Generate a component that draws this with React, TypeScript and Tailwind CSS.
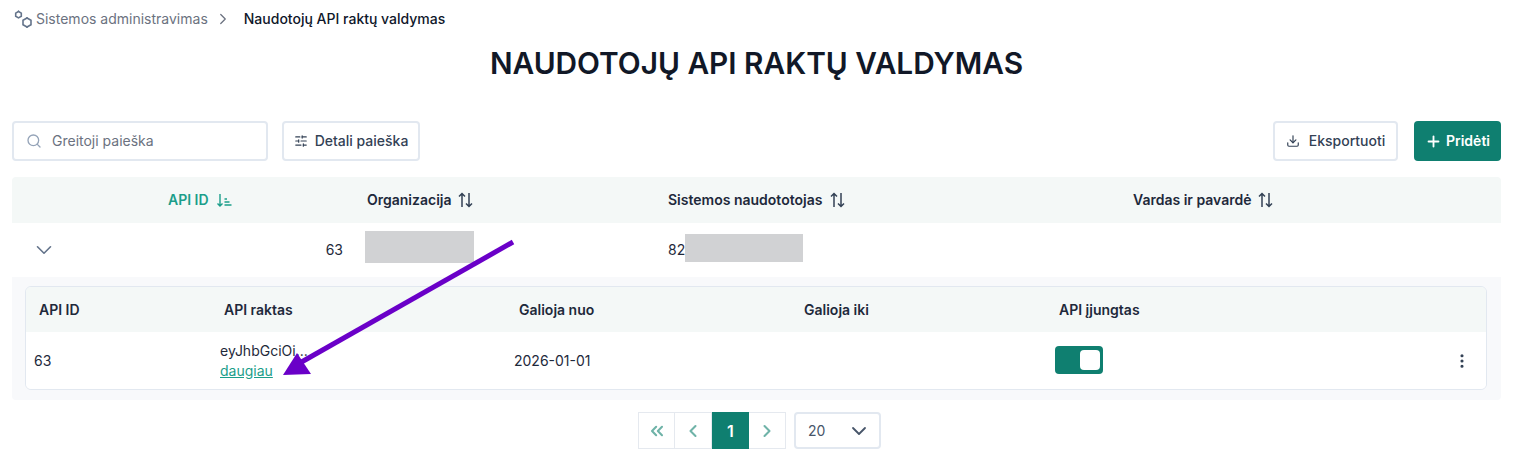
import React from 'react';
import {
  ChevronDown,
  ChevronLeft,
  ChevronRight,
  ChevronsLeft,
  Download,
  EllipsisVertical,
  Plus,
  Search,
  SlidersHorizontal,
} from 'lucide-react';

const SortIcon: React.FC = () => (
  <svg width="15" height="16" viewBox="0 0 15 16" fill="none" stroke="#334155" strokeWidth="1.5" className="shrink-0">
    <path d="M4 15V1.5M1 4.5l3-3 3 3" />
    <path d="M11 1v13.5M8 11.5l3 3 3-3" />
  </svg>
);

const SortedIcon: React.FC = () => (
  <svg width="16" height="16" viewBox="0 0 16 16" fill="none" stroke="#1b9e8a" strokeWidth="1.4" className="ml-[7px] shrink-0">
    <path d="M4 2v12M1.5 11.5L4 14l2.5-2.5" />
    <path d="M8.5 7H11M8.5 10h5M8.5 13h7" />
  </svg>
);

const GearsIcon: React.FC = () => (
  <svg width="19" height="19" viewBox="0 0 19 19" fill="none" stroke="#64748b" strokeWidth="1.6" className="shrink-0">
    <path d="M4.500 1.500l2.800 1.600v3.200l-2.800 1.600-2.800-1.600V3.100z" />
    <path d="M13 8l4 2.300v4.400l-4 2.300-4-2.300v-4.400z" />
    <path d="M4.500 0.500v1M13 7v1M13 17v1" strokeWidth="1.2" />
  </svg>
);

const PageButton: React.FC<{ children: React.ReactNode; active?: boolean }> = ({ children, active }) => (
  <button
    className={
      active
        ? 'flex h-[37px] w-[37px] items-center justify-center bg-[#0f7f70] text-base font-semibold text-white'
        : 'flex h-[37px] w-[37px] items-center justify-center border-y border-r border-[#e5e9ef] first:border-l text-[#6fb3a8]'
    }
  >
    {children}
  </button>
);

export default function App() {
  return (
    <div className="relative h-[461px] overflow-hidden bg-white pl-3 pr-[18px] font-['Inter',sans-serif] text-sm text-[#1e293b]">
      {/* breadcrumb */}
      <div className="flex h-[38px] items-center text-sm">
        <span className="ml-[2px]"><GearsIcon /></span>
        <span className="ml-[3px] text-[#6b7280]">Sistemos administravimas</span>
        <ChevronRight size={18} strokeWidth={1.7} className="ml-[6px] text-[#6b7280]" />
        <span className="ml-3 font-medium text-[#0f172a]">Naudotojų API raktų valdymas</span>
      </div>

      <h1 className="mt-[7px] text-center text-[29.8px] leading-9 font-semibold text-[#111827] uppercase">
        Naudotojų API raktų valdymas
      </h1>

      {/* toolbar */}
      <div className="mt-10 flex h-10 items-center">
        <div className="flex h-10 w-64 items-center rounded border-2 border-[#e2e8f0] pl-3 text-[#6b7280]">
          <Search size={16} strokeWidth={2} className="text-[#94a3b8]" />
          <span className="ml-[10px]">Greitoji paieška</span>
        </div>
        <button className="ml-[14px] flex h-10 w-[138px] items-center justify-center gap-[7px] rounded border-2 border-[#e2e8f0] font-medium text-[#334155]">
          <SlidersHorizontal size={14} strokeWidth={2} />
          Detali paieška
        </button>
        <button className="ml-auto flex h-10 w-[125px] items-center justify-center gap-[9px] rounded border-2 border-[#e2e8f0] font-medium text-[#334155]">
          <Download size={14} strokeWidth={2} />
          Eksportuoti
        </button>
        <button className="ml-4 flex h-10 w-[87px] items-center justify-center gap-1 rounded bg-[#0f7f70] font-semibold text-white">
          <Plus size={17} strokeWidth={2.6} />
          Pridėti
        </button>
      </div>

      {/* main table */}
      <div className="mt-4 overflow-hidden rounded">
        <div className="grid h-[46px] grid-cols-[343px_301px_465px_1fr] items-center bg-[#f4f8f7] font-semibold">
          <div className="flex items-center pl-[156px] text-[#1b9e8a]">
            API ID
            <SortedIcon />
          </div>
          <div className="flex items-center gap-[6px] pl-3">Organizacija<SortIcon /></div>
          <div className="flex items-center gap-2 pl-3">Sistemos naudototojas<SortIcon /></div>
          <div className="flex items-center gap-[6px] pl-3">Vardas ir pavardė<SortIcon /></div>
        </div>

        <div className="grid h-[54px] grid-cols-[343px_301px_465px_1fr] items-center bg-white">
          <div className="flex items-center justify-between pl-[19px] pr-3">
            <ChevronDown size={26} strokeWidth={1.5} className="text-[#64748b]" />
            <span>63</span>
          </div>
          <div className="flex items-center pl-[10px]"><div className="-mt-[6px] h-8 w-[109px] bg-[#d1d2d4]" /></div>
          <div className="flex items-center pl-3">
            <span>82</span>
            <div className="-mt-1 h-7 w-[118px] bg-[#d1d2d4]" />
          </div>
          <div />
        </div>

        {/* expanded row */}
        <div className="h-[123px] bg-[#f8f9fb] pt-[9px] pr-[14px] pl-[13px]">
          <div className="overflow-hidden rounded-md border border-[#e2e8f0]">
            <div className="grid h-[45px] grid-cols-[186px_295px_285px_255px_1fr] items-center bg-[#f4f8f7] font-semibold">
              <div className="pl-[13px]">API ID</div>
              <div className="pl-3">API raktas</div>
              <div className="pl-3">Galioja nuo</div>
              <div className="pl-3">Galioja iki</div>
              <div className="pl-3">API įjungtas</div>
            </div>
            <div className="grid h-[57px] grid-cols-[186px_295px_285px_255px_1fr] items-center bg-white">
              <div className="pl-2">63</div>
              <div className="pl-2 leading-[20px]">
                <div>eyJhbGciOi...</div>
                <a className="text-[#1b9e8a] underline">daugiau</a>
              </div>
              <div className="pl-[7px]">2026-01-01</div>
              <div />
              <div className="flex items-center justify-between pl-2 pr-[15px]">
                <div className="-mt-[2px] flex h-7 w-12 items-center justify-end rounded bg-[#0f7f70] pr-[3px]">
                  <div className="h-5 w-5 rounded bg-white" />
                </div>
                <EllipsisVertical size={18} strokeWidth={2.2} className="text-[#334155]" />
              </div>
            </div>
          </div>
        </div>
      </div>

      {/* pagination */}
      <div className="mt-3 flex h-[37px]">
        <div className="ml-[626px] flex">
          <PageButton><ChevronsLeft size={20} strokeWidth={2.5} /></PageButton>
          <PageButton><ChevronLeft size={20} strokeWidth={2.5} /></PageButton>
          <PageButton active>1</PageButton>
          <PageButton><ChevronRight size={20} strokeWidth={2.5} /></PageButton>
        </div>
        <div className="ml-2 flex h-[37px] w-[87px] items-center justify-between rounded border-2 border-[#e2e8f0] pl-3 pr-2 text-[#475569]">
          20
          <ChevronDown size={24} strokeWidth={1.8} />
        </div>
      </div>

      {/* annotation arrow */}
      <svg className="pointer-events-none absolute top-0 left-0" width="1519" height="461" fill="none">
        <path d="M513 242L298 364" stroke="#6a00c8" strokeWidth="5" />
        <path d="M283 375L297 353L311 374Z" fill="#6a00c8" />
      </svg>
    </div>
  );
}
